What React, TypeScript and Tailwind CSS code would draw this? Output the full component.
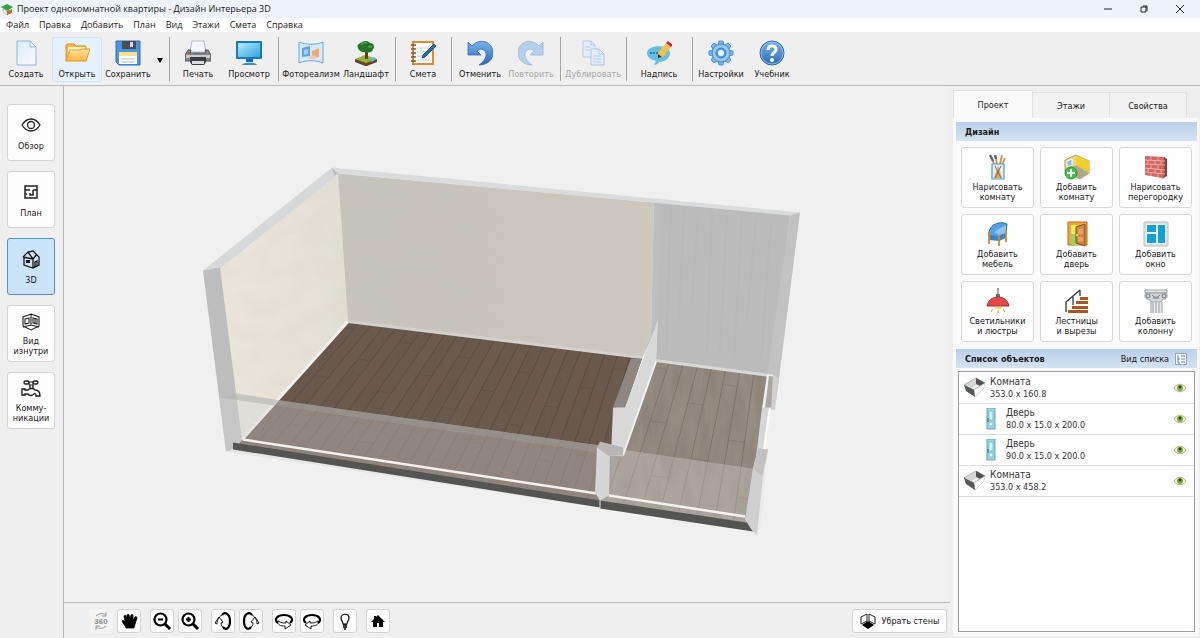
import { useState } from 'react';
import type { ReactNode } from 'react';

function Svg({ className = 'h-[26px] w-[26px]', box = 26, children }: { className?: string; box?: number; children: ReactNode }) {
  return (
    <svg className={className} viewBox={`0 0 ${box} ${box}`} fill="none" aria-hidden="true">
      {children}
    </svg>
  );
}

/* ---------- toolbar icons ---------- */

const NewIcon = () => (
  <Svg>
    <path d="M4 1h13l6 6v18H4z" fill="url(#paper)" stroke="#8fb4e6" />
    <path d="M17 1v6h6z" fill="#fff" stroke="#8fb4e6" />
  </Svg>
);

const OpenIcon = () => (
  <Svg>
    <path d="M2 21V5l1-1h7l2 2h10v4" fill="#f7b94b" stroke="#e08e22" />
    <path d="M4 7h17v5H4z" fill="#fff3c9" />
    <path d="M2 21l4-11h10l2-1h8l-4 12z" fill="url(#folder)" stroke="#e8982a" />
  </Svg>
);

const SaveIcon = () => (
  <Svg>
    <path d="M1 1h24v24H4l-3-3z" fill="#4d94dd" stroke="#2c6fbd" />
    <rect x="7" y="1" width="14" height="8" fill="#4a4d55" />
    <rect x="15" y="2" width="3" height="5" fill="#d5dbe3" />
    <rect x="4" y="12" width="18" height="12" fill="#fff" />
    <rect x="4" y="12" width="18" height="4" fill="#fce38a" />
    <path d="M6 19h14M6 22h14" stroke="#b6c3d2" />
  </Svg>
);

const PrintIcon = () => (
  <Svg>
    <path d="M7 1h12l2 11H5z" fill="#f4f7ff" stroke="#b3bccf" />
    <path d="M3 10h3l-1 3h16l-1-3h3l3 5v6H0v-6z" fill="#85878a" stroke="#55575a" />
    <path d="M1 15h24v3H1z" fill="#c9cbce" />
    <path d="M5 17h16v5l-2 3H7l-2-3z" fill="#3c3d40" />
    <path d="M7 21h12v3H7z" fill="#d9dbdd" />
    <circle cx="4" cy="13" r="1" fill="#f33" />
    <circle cx="7" cy="13" r="1" fill="#3d3" />
  </Svg>
);

const MonitorIcon = () => (
  <Svg>
    <rect x="0" y="1" width="26" height="18" rx="1" fill="#1c79b8" />
    <rect x="2" y="3" width="22" height="14" fill="url(#screen)" />
    <path d="M10 19h7v3h-7z" fill="#1b68a3" />
    <path d="M6 25c0-3 15-3 15 0z" fill="#2f8fd0" />
  </Svg>
);

const PhotoIcon = () => (
  <Svg>
    <path d="M1 2c7 3 17 3 24 0v21c-7-3-17-3-24 0z" fill="#d7eafb" stroke="#6ba6e0" />
    <path d="M4 8l8-2v10l-8 1z" fill="#5aa0ea" />
    <path d="M6 10l4-1v5l-4 1z" fill="#a9d0f7" />
    <path d="M14 11l7-3v9h-7z" fill="#f2a775" />
    <path d="M9 18l5-3 7 3-6 1z" fill="#f6c6a4" />
  </Svg>
);

const TreeIcon = () => (
  <Svg>
    <path d="M2 19l10-4 12 4-9 6H12z" fill="#8ab83b" />
    <path d="M2 19l11 4 11-4v3l-10 4h-2L2 22z" fill="#6d4222" />
    <path d="M12 10h3v9h-3z" fill="#6b3d1c" />
    <path d="M5 8c-2-4 3-5 4-6 3-2 7-1 8 1 4 0 5 4 3 6 0 3-4 4-7 3-4 1-7-1-8-4z" fill="#24742c" />
    <path d="M8 5c1-2 4-3 6-2M15 7c2-1 3 0 4 0" stroke="#4a9c46" strokeWidth="2" />
    <path d="M17 19l4-2 2 2-4 3z" fill="#4cc0e8" />
  </Svg>
);

const EstimateIcon = () => (
  <Svg>
    <rect x="3" y="2" width="20" height="22" fill="#fff" stroke="#e08a2c" strokeWidth="2" />
    <path d="M7 8h12M7 12h12M7 16h12M7 20h12" stroke="#bcd0e6" />
    <path d="M1 5h5M1 9h5M1 13h5M1 17h5M1 21h5" stroke="#7b5a3c" strokeWidth="1.5" />
    <path d="M24 4l2 2-11 11-3 1 1-3z" fill="#2b6fae" stroke="#1d4f82" />
  </Svg>
);

const UndoIcon = () => (
  <Svg>
    <path d="M1 2v13h13l-4-4c4-4 10-1 9 5-1 4-4 7-7 9 8 0 14-5 14-12C26 2 13-3 5 6z" fill="url(#arrow)" stroke="#2b6cb5" strokeWidth=".8" />
  </Svg>
);

const RedoIcon = () => (
  <Svg>
    <path d="M25 2v13H12l4-4c-4-4-10-1-9 5 1 4 4 7 7 9C6 25 0 20 0 13 0 2 13-3 21 6z" fill="#b5d0ea" stroke="#98b9d8" strokeWidth=".8" />
  </Svg>
);

const CopyIcon = () => (
  <Svg>
    <path d="M3 1h8l4 4v12H3z" fill="#e4eefa" stroke="#b3cbe6" />
    <path d="M11 1v4h4M5 7h5M5 10h5" stroke="#b3cbe6" />
    <path d="M11 9h8l5 5v11H11z" fill="#e4eefa" stroke="#a9c4e2" />
    <path d="M19 9v5h5M13 16h8M13 19h8M13 22h8" stroke="#b3cbe6" />
  </Svg>
);

const NoteIcon = () => (
  <Svg>
    <path d="M1 13C1 4 24 4 24 13c0 7-8 9-11 9 0 2-4 3-5 3l2-4c-5-1-9-4-9-8z" fill="#62bfe8" />
    <circle cx="5" cy="13" r="1" fill="#23628f" />
    <circle cx="8" cy="13" r="1" fill="#23628f" />
    <circle cx="11" cy="13" r="1" fill="#23628f" />
    <path d="M20 3l5 4-8 10-5 1v-5z" fill="#f6c043" />
    <path d="M20 3l2-2 5 4-2 2z" fill="#c2283a" />
    <path d="M12 14v4l4-1z" fill="#3b2e25" />
  </Svg>
);

const GearIcon = () => (
  <Svg>
    <g fill="#7db8ee" stroke="#3b86cf" strokeWidth=".8">
      {[0, 45, 90, 135, 180, 225, 270, 315].map((a) => (
        <path key={a} d="M10 5l1-4h4l1 4z" transform={`rotate(${a} 13 13)`} />
      ))}
      <circle cx="13" cy="13" r="9" />
    </g>
    <circle cx="13" cy="13" r="8" fill="#9acbf5" />
    <circle cx="13" cy="13" r="5" fill="#5a9fe0" stroke="#3b7fc6" />
    <circle cx="13" cy="13" r="3" fill="#f2f6fb" />
  </Svg>
);

const HelpIcon = () => (
  <Svg>
    <circle cx="13" cy="13" r="12" fill="url(#arrow)" stroke="#2a66ad" />
    <circle cx="13" cy="13" r="11" stroke="#8dbcec" />
    <path d="M9 10c0-6 9-5 8 0-1 3-4 3-4 6" stroke="#fff" strokeWidth="3" />
    <circle cx="13" cy="20" r="2" fill="#fff" />
  </Svg>
);

/* ---------- view mode icons ---------- */

const EyeIcon = () => (
  <Svg className="h-5 w-5" box={20}>
    <g stroke="#222" strokeWidth="1.3">
      <path d="M1 10c5-8 13-8 18 0-5 8-13 8-18 0z" />
      <circle cx="10" cy="10" r="3.500" />
    </g>
  </Svg>
);

const PlanIcon = () => (
  <Svg className="h-5 w-5" box={20}>
    <path d="M4 4h12v12H4zM4 8h5M12 8h4M9 11v2h3V8M4 12h2M9 16v-1" stroke="#222" strokeWidth="1.5" />
  </Svg>
);

const HouseIcon = () => (
  <Svg className="h-5 w-5" box={20}>
    <path d="M2 8l5-5 5-1 6 6v8l-6 3-9-3V8M7 3l5 7v9M12 10l4-5M2 8l10 2M14 18v-5l2-1v5" stroke="#161616" strokeWidth="1.3" />
    <path d="M5 11h4v3H5z" fill="#161616" />
  </Svg>
);

const InsideIcon = () => (
  <Svg className="h-5 w-5" box={20}>
    <path d="M10 2l8 3v9l-8 4-8-4V5zM10 13l8 2M10 13l-8 2M10 2v11M4 7l4-1v5l-4 1zM12 6l4 1v5l-4-1zM14 7v4" stroke="#222" strokeWidth="1.1" />
  </Svg>
);

const TapIcon = () => (
  <Svg className="h-5 w-5" box={20}>
    <path d="M1 10h3v1h3c1-2 6-2 7 0 3 0 5 2 5 6h-4c0-2-1-3-2-2-2 2-5 2-6 0H4v1H1zM9 6v4M12 6v4" stroke="#1d1d1d" strokeWidth="1.4" />
    <rect x="3" y="2" width="5" height="3" rx="1.5" stroke="#1d1d1d" strokeWidth="1.300" />
    <rect x="12" y="2" width="5" height="3" rx="1.5" stroke="#1d1d1d" strokeWidth="1.300" />
    <path d="M8 3h4v3H8z" stroke="#1d1d1d" />
  </Svg>
);

/* ---------- design icons ---------- */

const BrushesIcon = () => (
  <Svg>
    <path d="M9 10L6 2M12 11l-1-8M15 10l2-9M17 11l3-7" stroke="#d18d48" strokeWidth="1.800" />
    <path d="M5 1l3 6M10 1l1 4" stroke="#5f6973" strokeWidth="2.400" />
    <path d="M7 10h12v15H7z" fill="#d8effc" stroke="#4d9bd0" strokeWidth="1.2" />
    <path d="M9 24l4-12 4 12z" fill="#e5a35b" />
    <path d="M10 12l6 12M16 12l-6 12" stroke="#a96225" />
  </Svg>
);

const AddRoomIcon = () => (
  <Svg>
    <path d="M1 6l11-5 13 6v12l-9 6-15-8z" fill="#e8d48b" stroke="#b59d55" />
    <path d="M12 1l13 6v12l-13-8z" fill="#f1cf2c" />
    <path d="M12 11l13 8-9 6-15-8z" fill="#b3a58b" />
    <path d="M3 7l5-2v6l-5 2z" fill="#7db9f2" stroke="#fff" />
    <circle cx="7" cy="19" r="6" fill="#3fc14c" stroke="#24963a" />
    <path d="M7 15v8M3 19h8" stroke="#fff" strokeWidth="2" />
  </Svg>
);

const BricksIcon = () => (
  <Svg>
    <path d="M2 2l20 1v18l-3 3-17-3z" fill="#cf6661" />
    <path d="M21 3l3 2v17l-5 3 2-4z" fill="#9e3f3d" />
    <path d="M2 6l20 1M2 10l20 1M2 14l20 2M2 18l20 2M8 2v4M15 3v4M5 6v4M12 7v4M18 7v4M8 11v4M15 11v4M5 14v4M12 15v4M18 16v4M8 18v4M15 19v4" stroke="#f0b5ae" strokeWidth=".9" />
  </Svg>
);

const ChairIcon = () => (
  <Svg>
    <path d="M4 11c2-9 12-11 18-8l-1 10-7 4-10-2z" fill="#59a0e0" stroke="#2d6cab" />
    <path d="M9 11c3-1 5-5 12-6v7l-7 2z" fill="#8cc3f0" />
    <path d="M4 14l10 1v5l-10-1zM14 15l7-3v5l-7 3z" fill="#3d83c6" />
    <path d="M4 11v12M14 14v11M21 9v12" stroke="#d28b2d" strokeWidth="1.800" />
  </Svg>
);

const DoorIcon = () => (
  <Svg>
    <path d="M4 1h19v23H4z" fill="#f3a43d" stroke="#b86a17" />
    <path d="M7 4h13v20H7z" fill="#8ed85a" />
    <path d="M7 4h6v9H7z" fill="#e9ef5a" />
    <path d="M12 6l9-3v22l-9-3z" fill="#cf8443" stroke="#8e4c1c" />
    <path d="M14 8l5-1v6l-5 1zM14 16l5 0v5l-5-1z" fill="#e3a267" />
    <circle cx="13" cy="14" r="1" fill="#fbe06a" />
  </Svg>
);

const WindowIcon = () => (
  <Svg>
    <rect x="1" y="1" width="24" height="24" rx="1" fill="#dfe3e6" stroke="#b9bfc4" />
    <path d="M3 3h20v20H3z" fill="#eff7fb" />
    <path d="M4 4h9v7H4zM15 4h7v18h-7zM4 13h9v9H4z" fill="#169fdd" />
  </Svg>
);

const LampIcon = () => (
  <Svg>
    <path d="M13 0v8" stroke="#7d858c" strokeWidth="1.5" />
    <path d="M11 6h4v4h-4z" fill="#68717a" />
    <path d="M2 18c1-6 6-9 11-9s10 3 11 9z" fill="#e5484a" stroke="#a82c31" />
    <path d="M9 19h8c0 3-8 3-8 0z" fill="#fbd56a" />
    <path d="M8 21l-2 3M13 22v3M18 21l2 3" stroke="#d39a31" />
  </Svg>
);

const StairsIcon = () => (
  <Svg>
    <path d="M16 9h8v3h-8zM12 13h12v3H12zM8 18h16v3H8zM4 22h20v3H4z" fill="#a95520" />
    <path d="M2 24V14L16 2M16 2v6M9 9v8" stroke="#333" strokeWidth="1.3" />
  </Svg>
);

const ColumnIcon = () => (
  <Svg>
    <path d="M2 2h22v3H2z" fill="#e3e5e7" stroke="#8e9296" strokeWidth=".8" />
    <path d="M3 5h20c3 3 0 7-3 6l-2 3H8l-2-3c-3 1-6-3-3-6z" fill="#d2d5d8" stroke="#8e9296" strokeWidth=".8" />
    <circle cx="5" cy="8" r="2" stroke="#777c80" />
    <circle cx="21" cy="8" r="2" stroke="#777c80" />
    <path d="M9 7c2 3 6 3 8 0M10 10h6" stroke="#777c80" />
    <path d="M8 14h11v11H8z" fill="#e6e8ea" />
    <path d="M8 14v11M10 14v11M13 14v11M16 14v11M19 14v11" stroke="#9a9ea3" />
  </Svg>
);

/* ---------- object list icons ---------- */

const RoomIcon = () => (
  <Svg className="h-[22px] w-[22px]" box={22}>
    <path d="M0 8l12-7 9 5-11 7z" fill="#f1f1f2" stroke="#666" strokeWidth=".6" />
    <path d="M1 8l11-7v7l-4 3z" fill="#d3d5d7" />
    <path d="M12 1l9 5-5 3-4-2z" fill="#4f5155" />
    <path d="M10 13l11-7-1 5-9 9z" fill="#fbfbfb" stroke="#b5b7b9" strokeWidth=".6" />
    <path d="M0 8l10 5 1 7-9-6z" fill="#56585c" />
  </Svg>
);

const DoorItemIcon = () => (
  <Svg className="h-[22px] w-[22px]" box={22}>
    <rect x="7" y="0" width="8" height="21" fill="#9fd2e2" stroke="#5fa8c2" />
    <path d="M9 3h4v9H9z" fill="#d9f2f8" stroke="#5fa8c2" strokeWidth=".6" />
    <circle cx="11" cy="16" r="2" fill="#e8f8fc" stroke="#5fa8c2" strokeWidth=".6" />
    <path d="M8 10v4" stroke="#27617b" />
  </Svg>
);

const VisibleIcon = () => (
  <Svg className="h-3 w-3" box={12}>
    <path d="M0 6c3-5 9-5 12 0-3 5-9 5-12 0z" fill="#f3efcf" stroke="#d3a56b" />
    <circle cx="6" cy="6" r="3" fill="#6fae50" />
    <circle cx="6" cy="5" r="1.400" fill="#1e4f1c" />
  </Svg>
);

/* ---------- view controls ---------- */

const SpinIcon = () => (
  <Svg className="h-5 w-5" box={20}>
    <path d="M5 5c3-3 7-3 10-1M15 1v4h-4M15 15c-3 3-7 3-10 1M5 19v-4h4" stroke="#9a9a9a" />
    <text x="10" y="13" textAnchor="middle" fontSize="8" fontWeight="bold" fill="#8e8e8e" fontFamily="Liberation Sans, sans-serif">360</text>
  </Svg>
);

const HandIcon = () => (
  <Svg className="h-5 w-5" box={20}>
    <path d="M7 17c0-2-3-4-4-7 1-1 2 0 3 1L5 5c1-1 2-1 2 0l1 3V4c1-1 2-1 2 0l1 4 1-4c1-1 2 0 2 0v5l2-3c1-1 2 0 2 1l-2 6-1 4z" fill="#000" stroke="#000" strokeWidth=".8" />
  </Svg>
);

const ZoomIcon = ({ plus }: { plus?: boolean }) => (
  <Svg className="h-5 w-5" box={20}>
    <circle cx="8.500" cy="8.500" r="6" stroke="#000" strokeWidth="2.200" />
    <path d="M13 13l5 5" stroke="#000" strokeWidth="3" />
    <path d={plus ? 'M6 8.500h5M8.500 6v5' : 'M6 8.500h5'} stroke="#000" strokeWidth="2" />
  </Svg>
);

const TiltIcon = ({ right }: { right?: boolean }) => (
  <Svg className="h-5 w-5" box={20}>
    <g transform={right ? 'matrix(-1 0 0 1 20 0)' : undefined}>
      <path d="M9 4c3-4 8-1 8 6s-4 10-7 6" stroke="#000" strokeWidth="2.200" />
      <path d="M9 4C5 6 4 10 4 13l-2-1 4-6 4 5-2 1c0 2 1 4 2 4" stroke="#000" strokeWidth=".9" />
    </g>
  </Svg>
);

const TurnIcon = ({ right }: { right?: boolean }) => (
  <Svg className="h-5 w-5" box={20}>
    <g transform={right ? 'matrix(-1 0 0 1 20 0)' : undefined}>
      <path d="M4 12c-5-4 0-8 6-8s11 4 6 8" stroke="#000" strokeWidth="2.200" />
      <path d="M3 11c2 4 5 4 8 4v3l6-4-5-4v2c-3 0-5 0-8-2" stroke="#000" strokeWidth=".9" />
    </g>
  </Svg>
);

const BulbIcon = () => (
  <Svg className="h-5 w-5" box={20}>
    <path d="M8 13c0-3-2-3-2-6 0-5 8-5 8 0 0 3-2 3-2 6z" stroke="#000" strokeWidth="1.200" />
    <path d="M8 14h4M8 16h4M9 18h2" stroke="#000" strokeWidth="1.300" />
  </Svg>
);

const HomeIcon = () => (
  <Svg className="h-5 w-5" box={20}>
    <path d="M10 4l7 7h-2v5h-4v-4H9v4H5v-5H3l3-3V5h2v1z" fill="#000" />
  </Svg>
);

const WallsIcon = () => (
  <Svg className="h-4 w-4" box={16}>
    <path d="M7 1L1 4v7l6-3zM9 1l6 3v7L9 8z" stroke="#222" />
    <path d="M8 8l6 4-6 4-6-4z" fill="#000" />
  </Svg>
);

/* ---------- 3D scene ---------- */

type Point = [number, number];

function planks(count: number, topA: Point, topB: Point, bottomA: Point, bottomB: Point) {
  const mix = (a: Point, b: Point, t: number): Point => [a[0] + (b[0] - a[0]) * t, a[1] + (b[1] - a[1]) * t];
  return Array.from({ length: count }, (_, i) => {
    const top = mix(topA, topB, i / count);
    const bottom = mix(bottomA, bottomB, i / count);
    const nextTop = mix(topA, topB, (i + 1) / count);
    const nextBottom = mix(bottomA, bottomB, (i + 1) / count);
    const cut = ((i * 37) % 90) / 100 + 0.05;
    return { top, bottom, nextTop, nextBottom, cutA: mix(top, bottom, cut), cutB: mix(nextTop, nextBottom, cut) };
  });
}

const darkPlanks = planks(24, [347, 322], [642, 359], [238, 446], [602, 502]);
const lightPlanks = planks(8, [655, 361], [768, 376], [606, 499], [752, 524]);

function Floor({ rows, stroke, shade }: { rows: ReturnType<typeof planks>; stroke: string; shade: string }) {
  return (
    <>
      {rows.map((p, i) => (
        <g key={i}>
          <polygon
            points={[p.top, p.nextTop, i % 2 ? p.cutB : p.nextBottom, i % 2 ? p.cutA : p.bottom].join(' ')}
            fill={shade}
            opacity={((i * 7) % 5) / 24}
          />
          <path d={`M${p.top}L${p.bottom}`} stroke={stroke} strokeWidth=".8" opacity=".5" />
          <path d={`M${p.cutA}L${p.cutB}`} stroke={stroke} strokeWidth=".8" opacity=".25" />
        </g>
      ))}
    </>
  );
}

function Scene() {
  return (
    <svg className="h-full w-full" viewBox="64 88 886 513" role="img" aria-label="3D-вид квартиры">
      <defs>
        <clipPath id="floorA">
          <polygon points="347,322 642,359 625,408 612,450 602,452 600,505 233,446" />
        </clipPath>
        <clipPath id="floorB">
          <polygon points="656,361 768,376 752,526 600,503 610,456 622,456" />
        </clipPath>
        <filter id="plaster" x="0" y="0" width="100%" height="100%">
          <feTurbulence type="fractalNoise" baseFrequency=".03 .05" numOctaves="3" seed="4" />
          <feColorMatrix values="0 0 0 0 .62  0 0 0 0 .54  0 0 0 0 .48  0 0 0 .9 -.3" />
          <feComposite in2="SourceGraphic" operator="in" />
        </filter>
        <filter id="grain" x="0" y="0" width="100%" height="100%">
          <feTurbulence type="fractalNoise" baseFrequency=".09 .025" numOctaves="3" seed="9" />
          <feColorMatrix values="0 0 0 0 .15  0 0 0 0 .13  0 0 0 0 .1  0 0 0 .8 -.25" />
          <feComposite in2="SourceGraphic" operator="in" />
        </filter>
        <linearGradient id="sideWall" x1="0" y1="0" x2="1" y2="0">
          <stop offset="0" stopColor="#ebe6dc" />
          <stop offset="1" stopColor="#e2dfd4" />
        </linearGradient>
        <linearGradient id="backWall" x1="0" y1="0" x2="1" y2="0">
          <stop offset="0" stopColor="#c6c3bd" />
          <stop offset="1" stopColor="#ccc8c0" />
        </linearGradient>
      </defs>

      {/* floors */}
      <g clipPath="url(#floorA)">
        <rect x="225" y="315" width="430" height="200" fill="#69574b" />
        <Floor rows={darkPlanks} stroke="#45372f" shade="#7c6a5c" />
        <rect x="225" y="315" width="430" height="200" filter="url(#grain)" opacity=".5" />
      </g>
      <g clipPath="url(#floorB)">
        <rect x="595" y="355" width="180" height="180" fill="#958c83" />
        <Floor rows={lightPlanks} stroke="#5d554e" shade="#a0968b" />
        <rect x="595" y="355" width="180" height="180" filter="url(#grain)" opacity=".6" />
      </g>

      {/* left wall */}
      <polygon points="219,268 338,173 348,322 241,441" fill="url(#sideWall)" />
      <polygon points="219,268 338,173 348,322 241,441" filter="url(#plaster)" opacity=".3" />
      <path d="M348 322L242 440" stroke="#f1f0ec" strokeWidth="3" />
      <polygon points="203,271 332,168 339,174 220,269" fill="#d7d8d9" />
      <polygon points="332,168 339,174 334,176" fill="#bfc0c1" />
      <polygon points="203,271 220,268 242,441 233,450 226,452" fill="#bdbdbd" />

      {/* back wall */}
      <polygon points="338,174 654,203 651,335 642,359 348,322" fill="url(#backWall)" />
      <polygon points="338,174 654,203 651,335 642,359 348,322" filter="url(#plaster)" opacity=".5" />
      <path d="M348 322L642 358" stroke="#d2d1cf" strokeWidth="3" />
      <polygon points="654,203 662,201 658,325 642,359 651,335" fill="#bcbdbe" />
      <polygon points="661,202 790,215 770,376 656,361" fill="#bbbbbb" />
      <path
        d="M671 208l-5 145M684 209l-5 110M698 215l-6 90M712 211l-5 144M727 216l-7 135M742 218l-8 140M756 220l-9 100M771 222l-10 140"
        stroke="#b7b8b8"
        strokeWidth="2"
      />
      <polygon points="790,215 800,213 779,379 767,376" fill="#c2c2c3" />
      <polygon points="332,168 800,213 790,216 338,174" fill="#dadbdc" />
      <path d="M656 361L770 376" stroke="#d8d8d8" strokeWidth="3" />

      {/* partition */}
      <polygon points="631,359 642,359 625,409 613,408" fill="#8e8781" />
      <polygon points="658,320 656,362 622,457 611,455 613,408 625,408" fill="#d8d8d8" />
      <path d="M656 362L623 456" stroke="#f1f1f0" strokeWidth="2" />

      {/* right wall */}
      <polygon points="767,375 773,375 769,409 762,409" fill="#f0f0ee" />
      <polygon points="769,376 779,379 774,410 765,409" fill="#a9a6a3" />
      <polygon points="773,375 779,379 775,410 771,410" fill="#cfcfcf" />
      <polygon points="762,408 769,408 762,458 756,458" fill="#d6d6d6" />
      <polygon points="769,408 771,408 764,458 762,458" fill="#fafaf9" />

      {/* low front walls */}
      <polygon points="219,398 237,394 281,401 608,447 600,508 226,452" fill="#d5d5d8" opacity=".36" />
      <polygon points="219,398 237,394 281,401 608,447 598,453" fill="#9f9fa1" opacity=".4" />
      <polygon points="622,450 752,469 768,449 760,530 752,527 600,503 610,456" fill="#e0e0e0" opacity=".3" />
      <path d="M243 440L597 494M609 496L745 517" stroke="#f4f2ef" strokeWidth="2.500" />
      <polygon points="233,443 600,501 600,508 233,450" fill="#545452" />
      <polygon points="600,501 753,524 753,532 600,509" fill="#545452" />

      {/* posts */}
      <polygon points="597,447 610,455 609,496 600,501 595,493" fill="#d6d6d6" />
      <polygon points="600,442 623,448 623,456 608,456 597,448" fill="#b7b6b5" />
      <path d="M600 501v8" stroke="#dedede" strokeWidth="1" />
      <polygon points="753,469 758,449 768,450 763,477 757,536 752,531 745,520" fill="#cfcfcf" />
      <polygon points="753,469 758,449 768,450 762,477" fill="#c3c2c1" />
    </svg>
  );
}

/* ---------- application ---------- */

type ToolItem = { label: string; icon: ReactNode; wide?: boolean; disabled?: boolean; active?: boolean; menu?: boolean };

const toolGroups: ToolItem[][] = [
  [
    { label: 'Создать', icon: <NewIcon /> },
    { label: 'Открыть', icon: <OpenIcon />, active: true },
    { label: 'Сохранить', icon: <SaveIcon />, menu: true },
  ],
  [
    { label: 'Печать', icon: <PrintIcon /> },
    { label: 'Просмотр', icon: <MonitorIcon /> },
  ],
  [
    { label: 'Фотореализм', icon: <PhotoIcon />, wide: true },
    { label: 'Ландшафт', icon: <TreeIcon /> },
  ],
  [{ label: 'Смета', icon: <EstimateIcon /> }],
  [
    { label: 'Отменить', icon: <UndoIcon /> },
    { label: 'Повторить', icon: <RedoIcon />, disabled: true },
  ],
  [{ label: 'Дублировать', icon: <CopyIcon />, wide: true, disabled: true }],
  [{ label: 'Надпись', icon: <NoteIcon />, wide: true }],
  [
    { label: 'Настройки', icon: <GearIcon /> },
    { label: 'Учебник', icon: <HelpIcon /> },
  ],
];

const menuItems = ['Файл', 'Правка', 'Добавить', 'План', 'Вид', 'Этажи', 'Смета', 'Справка'];

const viewModes = [
  { id: 'overview', lines: ['Обзор'], icon: <EyeIcon /> },
  { id: 'plan', lines: ['План'], icon: <PlanIcon /> },
  { id: '3d', lines: ['3D'], icon: <HouseIcon /> },
  { id: 'inside', lines: ['Вид', 'изнутри'], icon: <InsideIcon /> },
  { id: 'pipes', lines: ['Комму-', 'никации'], icon: <TapIcon /> },
];

const designTools = [
  { lines: ['Нарисовать', 'комнату'], icon: <BrushesIcon /> },
  { lines: ['Добавить', 'комнату'], icon: <AddRoomIcon /> },
  { lines: ['Нарисовать', 'перегородку'], icon: <BricksIcon /> },
  { lines: ['Добавить', 'мебель'], icon: <ChairIcon /> },
  { lines: ['Добавить', 'дверь'], icon: <DoorIcon /> },
  { lines: ['Добавить', 'окно'], icon: <WindowIcon /> },
  { lines: ['Светильники', 'и люстры'], icon: <LampIcon /> },
  { lines: ['Лестницы', 'и вырезы'], icon: <StairsIcon /> },
  { lines: ['Добавить', 'колонну'], icon: <ColumnIcon /> },
];

const objects = [
  { name: 'Комната', size: '353.0 x 160.8', nested: false },
  { name: 'Дверь', size: '80.0 x 15.0 x 200.0', nested: true },
  { name: 'Дверь', size: '90.0 x 15.0 x 200.0', nested: true },
  { name: 'Комната', size: '353.0 x 458.2', nested: false },
];

const controlGroups = [
  [
    { label: 'Обзор 360', icon: <SpinIcon />, disabled: true },
    { label: 'Переместить', icon: <HandIcon /> },
  ],
  [
    { label: 'Отдалить', icon: <ZoomIcon /> },
    { label: 'Приблизить', icon: <ZoomIcon plus /> },
  ],
  [
    { label: 'Наклонить вверх', icon: <TiltIcon /> },
    { label: 'Наклонить вниз', icon: <TiltIcon right /> },
  ],
  [
    { label: 'Повернуть влево', icon: <TurnIcon /> },
    { label: 'Повернуть вправо', icon: <TurnIcon right /> },
  ],
  [{ label: 'Освещение', icon: <BulbIcon /> }],
  [{ label: 'Исходный вид', icon: <HomeIcon /> }],
];

function Lines({ lines }: { lines: string[] }) {
  return (
    <>
      {lines.map((line) => (
        <span key={line} className="block">{line}</span>
      ))}
    </>
  );
}

export default function App() {
  const [mode, setMode] = useState('3d');
  const [tab, setTab] = useState('Проект');

  return (
    <div className="flex h-screen flex-col overflow-hidden bg-[#efefef] [font-family:'DejaVu_Sans_Condensed','DejaVu_Sans',sans-serif] text-[9px] leading-[10px] text-[#1a1a1a]">
      <svg className="absolute h-0 w-0" aria-hidden="true">
        <defs>
          <linearGradient id="paper" x1="0" y1="0" x2="1" y2="1">
            <stop offset="0" stopColor="#dceafd" />
            <stop offset="1" stopColor="#f7fbff" />
          </linearGradient>
          <linearGradient id="folder" x1="0" y1="0" x2="0" y2="1">
            <stop offset="0" stopColor="#ffe9a6" />
            <stop offset="1" stopColor="#fbb43c" />
          </linearGradient>
          <linearGradient id="screen" x1="0" y1="0" x2="1" y2="1">
            <stop offset="0" stopColor="#b5ecfb" />
            <stop offset="1" stopColor="#2fa5df" />
          </linearGradient>
          <linearGradient id="arrow" x1="0" y1="0" x2="0" y2="1">
            <stop offset="0" stopColor="#7ab4ee" />
            <stop offset="1" stopColor="#2a68b4" />
          </linearGradient>
        </defs>
      </svg>

      <header className="flex h-[18px] shrink-0 items-center bg-[#edf3f8] pl-px [font-family:'Open_Sans',sans-serif]">
        <Svg className="h-3 w-3" box={12}>
          <path d="M0 4l6-3 6 3-6 4z" fill="#34a93b" />
          <path d="M2 6l4 2v4L2 9z" fill="#f2efe6" stroke="#999" strokeWidth=".5" />
          <path d="M6 8l5-2v4l-5 2z" fill="#c96b35" />
        </Svg>
        <h1 className="ml-1 flex-1">Проект однокомнатной квартиры - Дизайн Интерьера 3D</h1>
        <button className="flex w-9 justify-center" aria-label="Свернуть">
          <Svg className="h-2 w-2" box={8}><path d="M0 4h8" stroke="#222" /></Svg>
        </button>
        <button className="flex w-9 justify-center" aria-label="Свернуть в окно">
          <Svg className="h-2 w-2" box={8}><path d="M1 2h5v5H1zM3 1h4v5" stroke="#222" /></Svg>
        </button>
        <button className="mr-0.5 flex w-9 justify-center" aria-label="Закрыть">
          <Svg className="h-2 w-2" box={8}><path d="M0 0l8 8M8 0L0 8" stroke="#222" /></Svg>
        </button>
      </header>

      <nav className="flex h-[14px] shrink-0 items-center gap-2.5 bg-white pl-1.5 [font-family:'Open_Sans',sans-serif]">
        {menuItems.map((item) => (
          <button key={item} className="leading-[14px]">{item}</button>
        ))}
      </nav>

      <div className="flex h-[54px] shrink-0 gap-px border-b border-[#b9b9b9] pt-[5px] pl-px" role="toolbar">
        {toolGroups.map((group, g) => (
          <div key={g} className="flex gap-px">
            {g > 0 && (
              <div className="flex h-[44px] w-1.5 justify-center">
                <div className="w-px bg-[#a5a5a5]" />
              </div>
            )}
            {group.map((tool) => (
              <button
                key={tool.label}
                disabled={tool.disabled}
                className={`flex h-[45px] flex-col items-center gap-[3px] rounded-xs border pt-0.5 whitespace-nowrap ${tool.wide ? 'w-[58px]' : tool.label === 'Смета' ? 'w-12' : 'w-[50px]'} ${tool.active ? 'border-[#d0e5f8] bg-[#e5f1fb]' : 'border-transparent'} ${tool.disabled ? 'text-[#a8a8a8]' : ''}`}
              >
                {tool.icon}
                <span>{tool.label}</span>
              </button>
            ))}
            {group.some((tool) => tool.menu) && (
              <button className="flex h-[45px] w-[11px] items-center justify-center" aria-label="Варианты сохранения">
                <Svg className="h-1.5 w-1.5" box={6}><path d="M0 1h6L3 6z" fill="#000" /></Svg>
              </button>
            )}
          </div>
        ))}
      </div>

      <div className="flex min-h-0 flex-1">
        <aside className="flex w-16 shrink-0 flex-col gap-2.5 border-r border-[#b9b9b9] pt-[18px] pl-[7px]">
          {viewModes.map((view) => (
            <button
              key={view.id}
              onClick={() => setMode(view.id)}
              className={`flex h-[57px] w-12 flex-col items-center justify-center rounded-[3px] border ${view.lines.length > 1 ? 'gap-1' : 'gap-1.5'} ${mode === view.id ? 'border-[#5292c6] bg-[#cce4f9]' : 'border-[#d4d4d4] bg-[#fdfdfd]'}`}
            >
              {view.icon}
              <span><Lines lines={view.lines} /></span>
            </button>
          ))}
        </aside>

        <main className="flex min-w-0 flex-1 flex-col">
          <div className="min-h-0 flex-1 bg-[#f0f0f0]">
            <Scene />
          </div>
          <div className="flex h-9 shrink-0 items-center gap-[9px] border-t border-[#b9b9b9] pr-[3px] pl-[25px]">
            {controlGroups.map((group, g) => (
              <div key={g} className="flex gap-1">
                {group.map((control) => (
                  <button
                    key={control.label}
                    aria-label={control.label}
                    disabled={'disabled' in control}
                    className={`flex size-6 items-center justify-center rounded-[3px] border ${'disabled' in control ? 'border-[#f4f4f4] bg-[#f4f4f4]' : 'border-[#d4d4d4] bg-[#fdfdfd]'}`}
                  >
                    {control.icon}
                  </button>
                ))}
              </div>
            ))}
            <button className="ml-auto flex h-6 w-[95px] items-center justify-center gap-1.5 rounded-[3px] border border-[#d4d4d4] bg-[#fdfdfd] whitespace-nowrap">
              <WallsIcon />
              Убрать стены
            </button>
          </div>
        </main>

        <aside className="flex w-[250px] shrink-0 flex-col pt-1 pr-px pb-0.5 pl-[3px]">
          <div className="flex h-7 shrink-0 items-end" role="tablist">
            {['Проект', 'Этажи', 'Свойства'].map((name) => (
              <button
                key={name}
                role="tab"
                aria-selected={tab === name}
                onClick={() => setTab(name)}
                className={`border-[#e2e2e2] ${tab === name ? 'h-7 w-20 border border-b-0 bg-[#fafafa]' : 'h-[26px] w-[77px] border-t border-r bg-[#f2f2f2]'}`}
              >
                {name}
              </button>
            ))}
          </div>
          <div className="flex min-h-0 flex-1 flex-col bg-[#fafafa] py-1 pr-0.5 pl-[3px]">
            <h2 className="flex h-[19px] shrink-0 items-center bg-linear-to-b from-[#b9d0e8] to-[#d5e3f2] pl-[9px] font-bold">Дизайн</h2>
            <div className="grid grid-cols-3 gap-1.5 px-[5px] pt-1.5 pb-[7px]">
              {designTools.map((tool) => (
                <button
                  key={tool.lines.join(' ')}
                  className="flex h-[61px] flex-col items-center gap-0.5 rounded-[3px] border border-[#d8d8d8] bg-[#fefefe] pt-1.5 whitespace-nowrap"
                >
                  {tool.icon}
                  <span><Lines lines={tool.lines} /></span>
                </button>
              ))}
            </div>
            <div className="flex h-[19px] shrink-0 items-center bg-linear-to-b from-[#b9d0e8] to-[#d5e3f2] pr-2.5 pl-[9px]">
              <h2 className="flex-1 font-bold">Список объектов</h2>
              <button className="flex items-center gap-1.5">
                Вид списка
                <Svg className="h-3 w-3" box={12}>
                  <rect width="12" height="12" fill="#fff" stroke="#8fa5bd" strokeWidth="2" />
                  <path d="M3 2v8h2M3 6h2M6 3h4M6 6h4M6 9h4" stroke="#5c87b5" />
                </Svg>
              </button>
            </div>
            <ul className="mx-0.5 mt-[3px] min-h-0 flex-1 overflow-hidden border border-[#9a9fa5] bg-white pt-px">
              {objects.map((item, i) => (
                <li key={i} className={`flex h-[31px] items-center border-b border-[#dedede] pr-2 ${item.nested ? 'pl-[21px]' : 'pl-[5px]'}`}>
                  {item.nested ? <DoorItemIcon /> : <RoomIcon />}
                  <div className="ml-1 flex-1 text-[#333]">
                    <div className="text-[10px] leading-3">{item.name}</div>
                    <div className="leading-3">{item.size}</div>
                  </div>
                  <button aria-label="Видимость">
                    <VisibleIcon />
                  </button>
                </li>
              ))}
            </ul>
          </div>
        </aside>
      </div>
    </div>
  );
}
